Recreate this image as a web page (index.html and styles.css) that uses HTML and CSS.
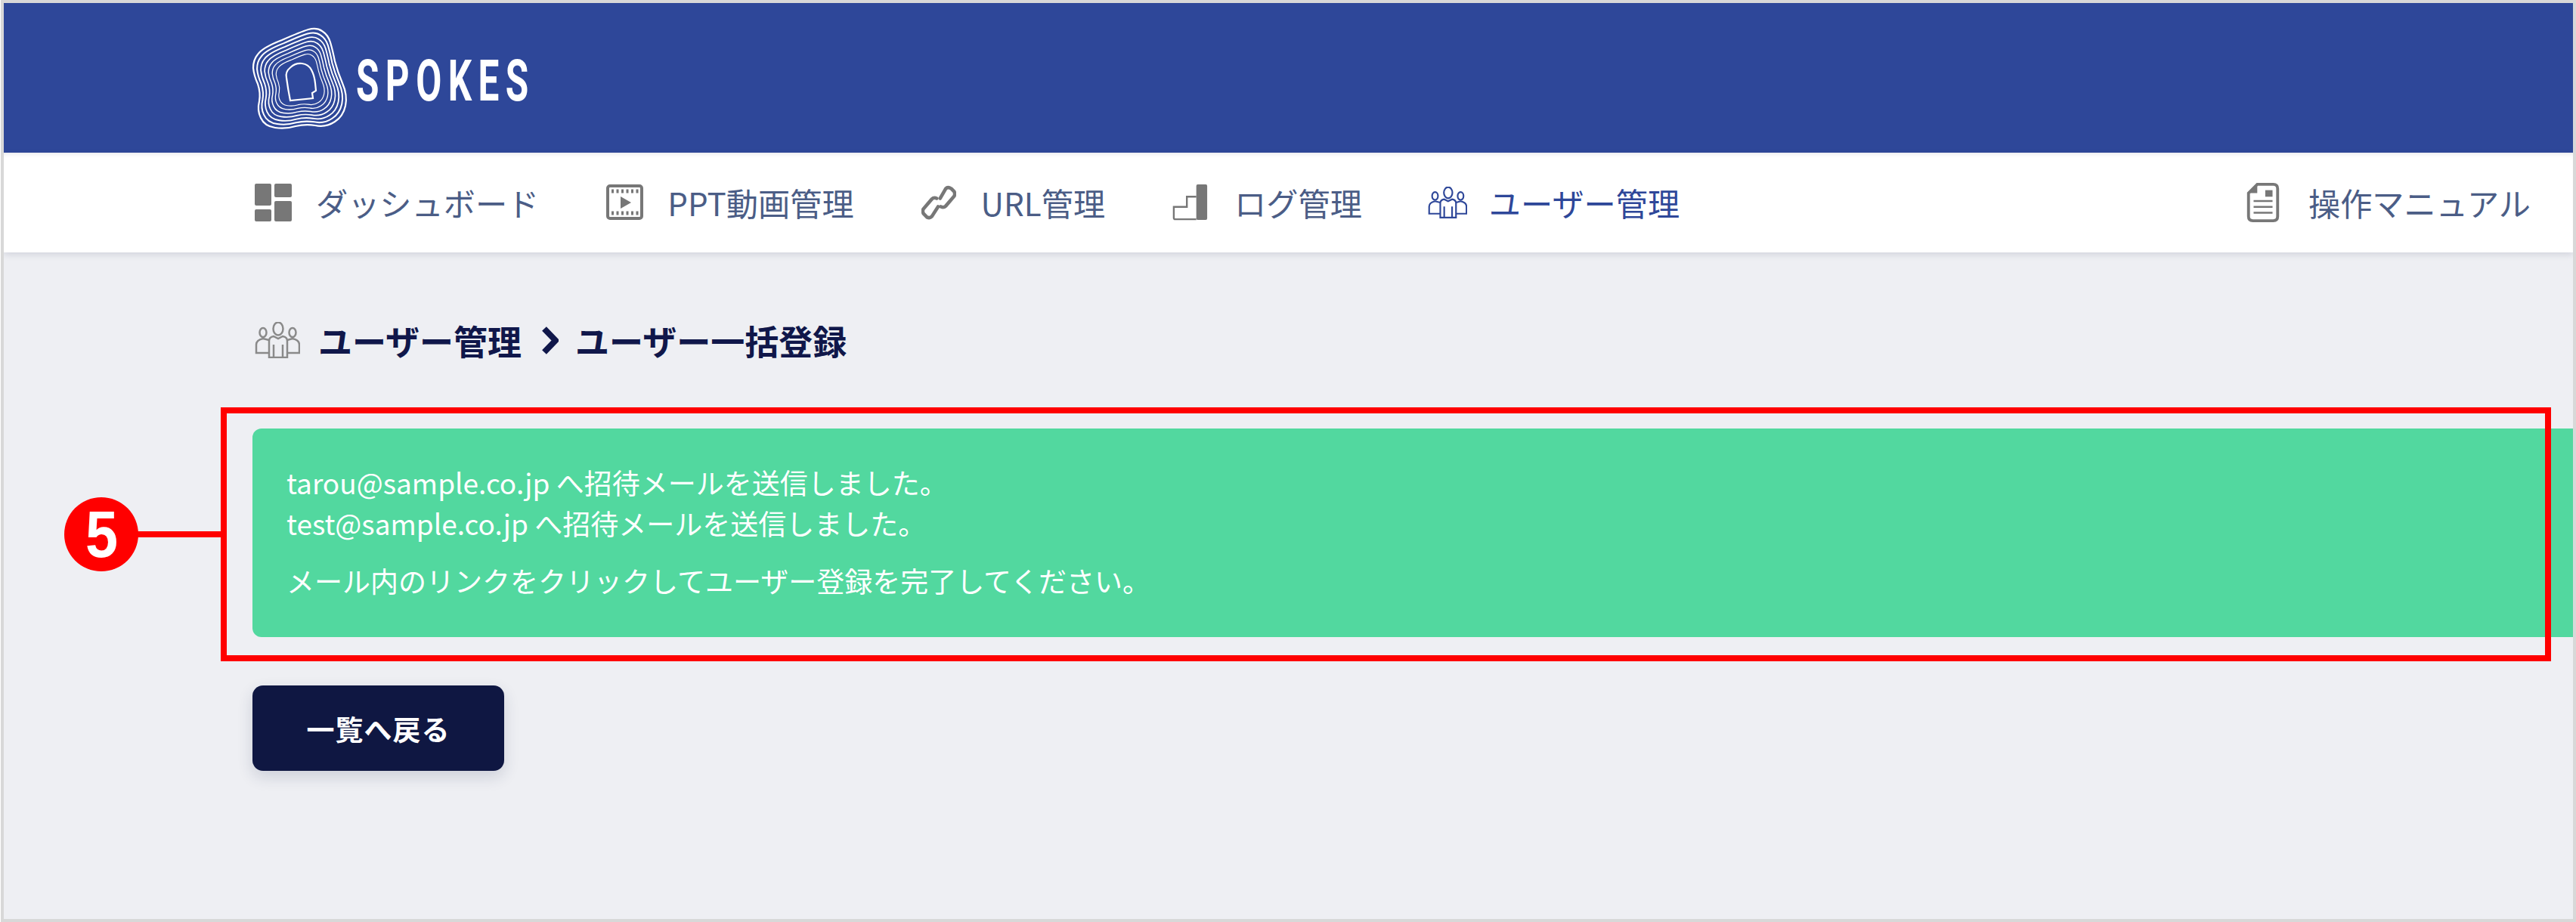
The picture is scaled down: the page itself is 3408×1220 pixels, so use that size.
FILE: index.html
```html
<!DOCTYPE html>
<html lang="ja">
<head>
<meta charset="utf-8">
<title>SPOKES</title>
<link rel="stylesheet" href="styles.css">
</head>
<body>
<div class="frame">
  <header class="topbar">
    <div class="brand">
      <svg class="logo" viewBox="0 0 150 160" width="150" height="160" aria-hidden="true">
        <defs>
          <path id="blob" d="M20,49 Q26,40 52,30 Q77,19 87,16 Q98,13 105,18 Q113,23 116,33 Q119,43 122,58 Q126,73 132,87 Q139,103 136,117 Q133,131 122,138 Q110,146 96,143 Q83,141 70,144 Q57,148 43,146 Q29,144 24,133 Q19,123 22,111 Q24,100 20,88 Q15,77 14,67 Q14,56 20,49Z"/>
        </defs>
        <g class="logo-rings">
          <use href="#blob"/>
          <use href="#blob" transform="translate(77 85) scale(.92) translate(-77 -85)"/>
          <use href="#blob" transform="translate(77 85) scale(.84) translate(-77 -85)"/>
          <use href="#blob" transform="translate(77 85) scale(.76) translate(-77 -85)"/>
          <use href="#blob" transform="translate(77 85) scale(.68) translate(-77 -85)"/>
          <use href="#blob" transform="translate(77 85) scale(.60) translate(-77 -85)"/>
          <use href="#blob" transform="translate(77 85) scale(.52) translate(-77 -85)"/>
          <path d="M63.5,66 Q70,60 78.5,61 Q87,62 91,69.5 Q95,77 96,87 L97,97 L92,100 L93,107 L63,110 Q60,95 58,80 Q56,72 63.5,66Z"/>
        </g>
      </svg>
      <span class="wordmark">SPOKES</span>
    </div>
  </header>

  <nav class="navbar">
    <a class="nav-item">
      <svg class="ico" viewBox="0 0 50 50" width="50" height="50" aria-hidden="true"><g class="solid"><rect x="0" y="0" width="22" height="29" rx="2"/><rect x="26" y="0" width="23" height="18" rx="2"/><rect x="0" y="34" width="22" height="16" rx="2"/><rect x="26" y="23" width="23" height="27" rx="2"/></g></svg>
      <span>ダッシュボード</span>
    </a>
    <a class="nav-item">
      <svg class="ico" viewBox="0 0 50 50" width="50" height="50" aria-hidden="true"><rect class="line3" x="2" y="3" width="45" height="43" rx="3"/><path class="dash" d="M7,10H43M7,39H43"/><path class="solid" d="M19,17 L33,25 L19,33Z"/></svg>
      <span>PPT動画管理</span>
    </a>
    <a class="nav-item">
      <svg class="ico ico-link" viewBox="0 0 50 50" width="46" height="50" aria-hidden="true"><path class="line4" d="M27,19 L35,5 Q38,2 43,5 L47,9 Q49,13 47,16 L35,30 Q32,33 28,31"/><path class="line4" d="M24,31 L15,45 Q12,48 8,46 L3,41 Q1,37 3,34 L15,20 Q18,17 22,19"/></svg>
      <span>URL管理</span>
    </a>
    <a class="nav-item">
      <svg class="ico ico-log" viewBox="0 0 50 50" width="48" height="50" aria-hidden="true"><path class="line2" d="M33,17 H20 V31 H2 V46 Q2,48 4,48 H33"/><rect class="solid" x="33" y="0" width="15" height="49" rx="2"/></svg>
      <span>ログ管理</span>
    </a>
    <a class="nav-item is-active">
      <svg class="ico ico-user" viewBox="0 0 60 48" width="52" height="42" aria-hidden="true"><g class="people"><ellipse cx="31" cy="9" rx="6.5" ry="8.5"/><path d="M19,47 V25 Q19,20 25,19 L31,22 L37,19 Q43,20 43,25 V47 Z M25,30 V47 M37,30 V47"/><ellipse cx="11" cy="14" rx="4.5" ry="6"/><path d="M19,24 L11,22 Q2,24 2,30 V41 H19"/><ellipse cx="50" cy="14" rx="4.5" ry="6"/><path d="M43,24 L50,22 Q59,24 59,30 V41 H43"/></g></svg>
      <span>ユーザー管理</span>
    </a>
    <a class="nav-item nav-manual">
      <svg class="ico" viewBox="0 0 44 54" width="44" height="52" aria-hidden="true"><path class="line3" d="M14,2 H36 Q42,2 42,8 V46 Q42,52 36,52 H8 Q2,52 2,46 V14Z"/><path class="solid" d="M14,2 V14 H2Z"/><rect class="solid" x="25" y="10" width="10" height="9"/><path class="line2" d="M9,25H35M9,33H35M9,41H35"/></svg>
      <span>操作マニュアル</span>
    </a>
  </nav>

  <main class="content">
    <h1 class="page-title">
      <svg class="title-ico" viewBox="0 0 60 48" width="60" height="48" aria-hidden="true"><g class="people people-gray"><ellipse cx="31" cy="9" rx="6.5" ry="8.5"/><path d="M19,47 V25 Q19,20 25,19 L31,22 L37,19 Q43,20 43,25 V47 Z M25,30 V47 M37,30 V47"/><ellipse cx="11" cy="14" rx="4.5" ry="6"/><path d="M19,24 L11,22 Q2,24 2,30 V41 H19"/><ellipse cx="50" cy="14" rx="4.5" ry="6"/><path d="M43,24 L50,22 Q59,24 59,30 V41 H43"/></g></svg>
      <span>ユーザー管理</span>
      <svg class="crumb-sep" viewBox="0 0 22 37" width="22" height="37" aria-hidden="true"><path d="M3,3 L18,18.5 L3,34"/></svg>
      <span>ユーザー一括登録</span>
    </h1>

    <section class="notice-wrap">
      <div class="notice">
        <p class="notice-lines">tarou@sample.co.jp へ招待メールを送信しました。<br>test@sample.co.jp へ招待メールを送信しました。</p>
        <p class="notice-last">メール内のリンクをクリックしてユーザー登録を完了してください。</p>
      </div>
      <div class="callout-box"></div>
      <div class="callout-line"></div>
      <div class="callout-num"><span class="callout-digit">5</span></div>
    </section>

    <a class="back-btn">一覧へ戻る</a>
  </main>
</div>
</body>
</html>
```

FILE: styles.css
```css
* { box-sizing: border-box; }
html, body { margin: 0; padding: 0; background: #fff; }
body { font-family: "Noto Sans CJK JP", "Noto Sans", sans-serif; }

.frame {
  width: 3407px;
  height: 1220px;
  margin-left: 1px;
  border: 4px solid #d8d8d8;
  background: #eeeff3;
  overflow: hidden;
  display: flex;
  flex-direction: column;
}

.topbar {
  height: 198px;
  flex: none;
  background: #2e4799;
  padding-left: 316px;
  display: flex;
  align-items: flex-start;
}
.brand { display: flex; align-items: center; height: 160px; margin-top: 19px; }
.logo { display: block; flex: none; }
.logo-rings { fill: none; stroke: #fff; stroke-width: 2.2; }
.logo-rings use, .logo-rings path { vector-effect: non-scaling-stroke; }
.wordmark {
  font-family: Roboto, "Liberation Sans", sans-serif;
  font-weight: 700;
  font-size: 76px;
  line-height: 1;
  letter-spacing: 13px;
  color: #fff;
  margin-top: 8px;
  display: inline-block;
  transform: scaleX(.65);
  transform-origin: left center;
}

.navbar {
  height: 132px;
  flex: none;
  background: #fff;
  box-shadow: 0 3px 8px rgba(40, 50, 90, .14), inset 0 6px 6px -5px rgba(40, 50, 90, .14);
  padding: 0 56px 0 332px;
  display: flex;
  align-items: center;
  gap: 89px;
  position: relative;
}
.nav-item {
  display: flex;
  align-items: center;
  gap: 31px;
  font-size: 42.2px;
  line-height: 1;
  color: #4b5d86;
  white-space: nowrap;
}
.nav-item.is-active { color: #2e4799; }
.nav-manual { margin-left: auto; gap: 38px; }
.ico { display: block; flex: none; }
.ico-link { margin-right: 2px; }
.ico-log { margin-right: 3px; }
.ico-user { margin-left: -2px; margin-right: -2px; }
.solid { fill: #777; }
.line2, .line3, .line4 { fill: none; stroke: #777; }
.line2 { stroke-width: 2.5; }
.line3 { stroke-width: 4; }
.line4 { stroke-width: 5; stroke-linecap: round; }
.dash { fill: none; stroke: #777; stroke-width: 5; stroke-dasharray: 3 3.5; }
.people { fill: none; stroke: #2e4799; stroke-width: 2.5; }
.people-gray { stroke: #8a8a8a; }

.content {
  flex: 1;
  padding: 88px 0 0 329px;
  display: flex;
  flex-direction: column;
  align-items: flex-start;
}
.page-title {
  margin: 0 0 0 3px;
  height: 56px;
  display: flex;
  align-items: center;
  font-size: 45px;
  font-weight: 700;
  line-height: 1;
  color: #10174a;
  white-space: nowrap;
}
.title-ico { display: block; flex: none; margin-right: 24px; }
.crumb-sep { display: block; flex: none; margin: 0 22px 0 27px; fill: none; stroke: #10174a; stroke-width: 8; }

.notice-wrap {
  position: relative;
  margin-top: 89px;
  width: 100%;
}
.notice {
  height: 276px;
  width: 3070px;
  background: #52d89f;
  border-radius: 12px 0 0 12px;
  padding: 44px 45px 0;
  color: #fff;
  font-size: 37px;
  line-height: 54px;
}
.notice p { margin: 0; }
.notice .notice-last { margin-top: 22px; }

.callout-box {
  position: absolute;
  left: -42px;
  top: -28px;
  width: 3083px;
  height: 336px;
  border: 8px solid #f00;
}
.callout-line {
  position: absolute;
  left: -155px;
  top: 136px;
  width: 115px;
  height: 8px;
  background: #f00;
}
.callout-num {
  position: absolute;
  left: -249px;
  top: 91px;
  width: 98px;
  height: 98px;
  border-radius: 50%;
  background: #f00;
  color: #fff;
  font-family: "Liberation Sans", Arial, sans-serif;
  font-weight: 700;
  font-size: 88px;
  line-height: 98px;
  text-align: center;
}
.callout-digit { display: inline-block; transform: scaleX(.88); }

.back-btn {
  margin-top: 64px;
  width: 333px;
  height: 113px;
  border-radius: 14px;
  background: #0f1742;
  box-shadow: 0 8px 20px rgba(40, 50, 90, .16);
  color: #fff;
  font-size: 37px;
  letter-spacing: 1px;
  font-weight: 700;
  display: flex;
  align-items: center;
  justify-content: center;
}
```
